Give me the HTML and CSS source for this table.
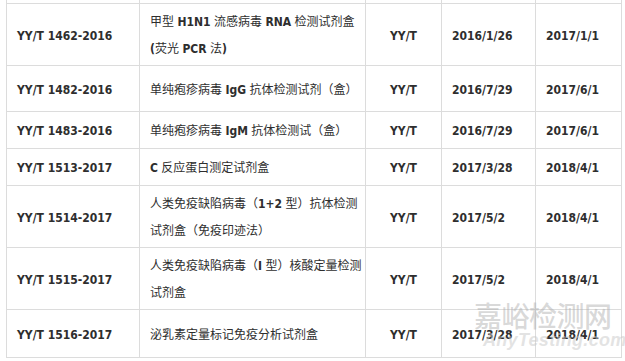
FILE: index.html
```html
<!DOCTYPE html>
<html lang="zh-CN">
<head>
<meta charset="utf-8">
<title>YY/T 标准</title>
<link rel="stylesheet" href="styles.css">
</head>
<body>
<div class="wrap">
  <table class="std">
    <colgroup>
      <col class="c1"><col class="c2"><col class="c3"><col class="c4"><col class="c5">
    </colgroup>
    <tr class="cut"><td></td><td></td><td></td><td></td><td></td></tr>
    <tr class="h62">
      <td class="b">YY/T 1462-2016</td>
      <td>甲型 <b class="lat">H1N1</b> 流感病毒 <b class="lat">RNA</b> 检测试剂盒<br><b class="lat">(</b>荧光 <b class="lat">PCR</b> 法<b class="lat">)</b></td>
      <td class="b ctr">YY/T</td>
      <td class="b">2016/1/26</td>
      <td class="b">2017/1/1</td>
    </tr>
    <tr class="h46">
      <td class="b">YY/T 1482-2016</td>
      <td>单纯疱疹病毒 <b class="lat">IgG</b> 抗体检测试剂（盒）</td>
      <td class="b ctr">YY/T</td>
      <td class="b">2016/7/29</td>
      <td class="b">2017/6/1</td>
    </tr>
    <tr class="h37">
      <td class="b">YY/T 1483-2016</td>
      <td>单纯疱疹病毒 <b class="lat">IgM</b> 抗体检测试（盒）</td>
      <td class="b ctr">YY/T</td>
      <td class="b">2016/7/29</td>
      <td class="b">2017/6/1</td>
    </tr>
    <tr class="h37">
      <td class="b">YY/T 1513-2017</td>
      <td><b class="lat">C</b> 反应蛋白测定试剂盒</td>
      <td class="b ctr">YY/T</td>
      <td class="b">2017/3/28</td>
      <td class="b">2018/4/1</td>
    </tr>
    <tr class="h62">
      <td class="b">YY/T 1514-2017</td>
      <td>人类免疫缺陷病毒（<b class="lat">1+2</b> 型）抗体检测<br>试剂盒（免疫印迹法）</td>
      <td class="b ctr">YY/T</td>
      <td class="b">2017/5/2</td>
      <td class="b">2018/4/1</td>
    </tr>
    <tr class="h62">
      <td class="b">YY/T 1515-2017</td>
      <td>人类免疫缺陷病毒（<b class="lat">I</b> 型）核酸定量检测<br>试剂盒</td>
      <td class="b ctr">YY/T</td>
      <td class="b">2017/5/2</td>
      <td class="b">2018/4/1</td>
    </tr>
    <tr class="h48">
      <td class="b">YY/T 1516-2017</td>
      <td>泌乳素定量标记免疫分析试剂盒</td>
      <td class="b ctr">YY/T</td>
      <td class="b">2017/3/28</td>
      <td class="b">2018/4/1</td>
    </tr>
  </table>
  <div class="mark">
    <div class="mark-cn">嘉峪检测网</div>
    <div class="mark-en">AnyTesting.com</div>
  </div>
</div>
</body>
</html>
```

FILE: styles.css
```css
html, body {
  margin: 0;
  padding: 0;
  background: #ffffff;
}

.wrap {
  position: relative;
  width: 625px;
  height: 361px;
  overflow: hidden;
  padding-left: 6px;
  box-sizing: border-box;
}

.std {
  border-collapse: collapse;
  table-layout: fixed;
  width: 615px;
  color: #2e2e2e;
}

.c1 { width: 133px; }
.c2 { width: 226px; }
.c3 { width: 76px; }
.c4 { width: 94px; }
.c5 { width: 86px; }

.std td {
  border: 1px solid #dcdcdc;
  padding: 3px 0 0 10px;
  font-family: "DejaVu Sans", "Noto Sans CJK SC", sans-serif;
  font-stretch: condensed;
  font-weight: 400;
  font-size: 12px;
  line-height: 27px;
  vertical-align: middle;
  white-space: nowrap;
}

.std td.b {
  font-weight: 700;
}

.std td.ctr {
  text-align: center;
  padding-left: 2px;
  padding-right: 2px;
}

.lat {
  font-weight: 700;
}

.std tr.cut td {
  border-top: none;
  padding: 0;
  height: 3px;
  line-height: 0;
}

.h62 { height: 62px; }
.h46 { height: 46px; }
.h37 { height: 37px; }
.h48 { height: 48px; }

.mark {
  position: absolute;
  left: 474px;
  top: 299px;
  color: rgba(170, 170, 170, 0.45);
  pointer-events: none;
}

.mark-cn {
  font-family: "Noto Sans CJK SC", sans-serif;
  font-size: 28px;
  line-height: 32px;
  font-weight: 500;
  letter-spacing: -0.5px;
}

.mark-en {
  font-family: "Liberation Sans", sans-serif;
  font-style: italic;
  font-weight: 700;
  font-size: 18px;
  line-height: 18px;
  margin-left: 9px;
  letter-spacing: 0.3px;
  color: rgba(200, 200, 200, 0.5);
}
```
